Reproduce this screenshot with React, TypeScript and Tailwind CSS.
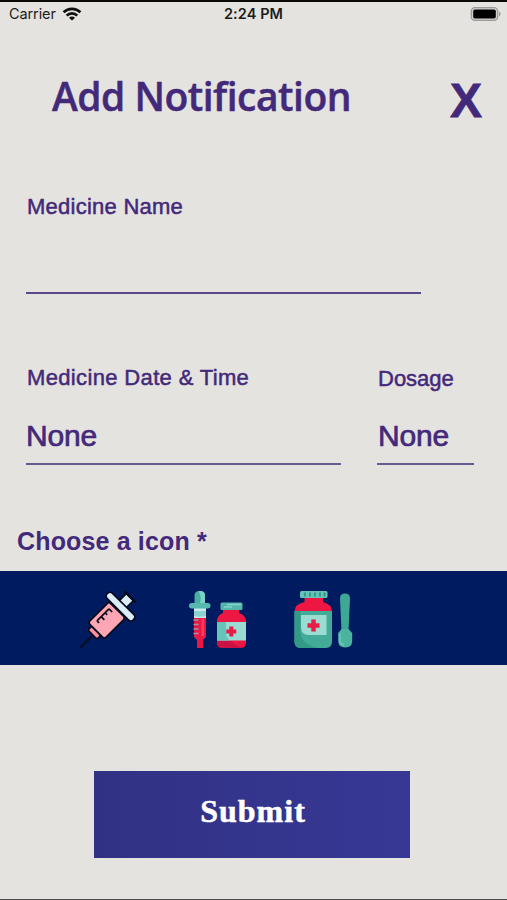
import React from 'react';

const Wifi = () => (
    <svg width="20" height="16" viewBox="0 0 20 16" fill="none" stroke="#111" strokeWidth="2.7">
        <path d="M1.6 6.3a12 12 0 0 1 16.8 0" />
        <path d="M4.7 9.6a7.6 7.6 0 0 1 10.6 0" />
        <path d="M10 14.6 7 11.8a4.4 4.4 0 0 1 6 0Z" fill="#111" stroke="none" />
    </svg>
);

const Battery = () => (
    <svg width="32" height="16" viewBox="0 0 32 16">
        <rect x="1.3" y="1.6" width="26.4" height="12.8" rx="3.6" fill="#d2d1cf" stroke="#9b9a98" strokeWidth="1.3" />
        <rect x="3.2" y="3.4" width="22.6" height="9.2" rx="1.8" fill="#000" />
        <path d="M29 5.6c2 .8 2 4 0 4.8Z" fill="#9b9a98" />
    </svg>
);

const StatusBar = () => (
    <div className="grid h-7 grid-cols-3 items-center border-t-2 border-[#0b0a09] pb-[3px] pl-[9px] pr-[5px] text-[#1c1c1c]">
        <div className="flex h-6 items-center gap-[6px]">
            <span className="font-['Inter',sans-serif] text-[14.5px] tracking-[-0.1px]">Carrier</span>
            <Wifi />
        </div>
        <span className="-ml-1 text-center font-['Inter',sans-serif] text-[14.5px] font-semibold tracking-[0.1px]">2:24 PM</span>
        <div className="flex justify-end">
            <Battery />
        </div>
    </div>
);

const Syringe = () => (
    <svg width="80" height="80" viewBox="0 0 80 80">
        <path d="M10.5 67.5 22 56" stroke="#050b1c" strokeWidth="2" />
        <g transform="translate(36.5 40.5) rotate(45)" stroke="#050b1c" strokeWidth="1.7" strokeLinejoin="round">
            <rect x="-6.5" y="14.5" width="13" height="5.5" rx="2" fill="#f7909f" />
            <rect x="-11.5" y="-15" width="23" height="29.5" rx="2.5" fill="#fea6b4" />
            <rect x="-5" y="-33" width="10" height="10" fill="#d9ecf8" />
            <path d="M-8-33.5H8" strokeWidth="2.2" />
            <rect x="-18.5" y="-23.5" width="37" height="7.5" rx="3.5" fill="#dcedfa" />
            <path d="M-6.5-10V7M-6.5-10h4.5M-6.5-4.5h3M-6.5 1h4.5M-6.5 7h3" fill="none" strokeWidth="1.7" />
        </g>
    </svg>
);

const DropperBottle = () => (
    <svg width="80" height="80" viewBox="0 0 80 80">
        {/* dropper */}
        <path d="M14.5 26V15.5q0-4.5 5.2-4.5t5.3 4.5V26Z" fill="#48aea2" />
        <path d="M18.5 11.2q6.5-.8 6.5 4.3V23h-5q2-6-1.5-11.8Z" fill="#79d3c6" />
        <path d="M14 27h12v29.5l-3 3V68h-6v-8.5l-3-3Z" fill="#c9e9ed" />
        <path d="M14 31h12v5q-6 1.5-12 0Z" fill="#89d4cc" />
        <path d="M14 38h12v18.5l-3 3V68h-6v-8.5l-3-3Z" fill="#ee1744" />
        <path d="M21.5 39H24v17h-2.5Z" fill="#ff3b60" />
        <path d="M13.5 40h5M13.5 44.5h5M13.5 49h5M13.5 53.5h5" stroke="#9c96a8" strokeWidth="1.5" />
        <rect x="9" y="23" width="21.5" height="5.5" rx="2.7" fill="#56b8ae" />
        {/* bottle */}
        <path d="M43 28.5h16V33q7 2 7 8.5v21q0 5.5-6 5.5H43q-6 0-6-5.5v-21q0-6.5 6-8.5Z" fill="#ee1744" />
        <path d="M37 42h29v18.5H37Z" fill="#9adbd2" />
        <path d="M37 42h9v11q0 5 4 7.5H37Z" fill="#65c5b8" />
        <path d="M37 61h14q4 5 13 6-2 1-5 1H43q-6 0-6-5.5Z" fill="#cc1244" />
        <rect x="40.5" y="22.5" width="22" height="7.5" rx="1.5" fill="#54b6aa" />
        <path d="M47 24.5h14M44 27h8" stroke="#83d4cb" strokeWidth="1.5" />
        <path d="M51.3 46.5v10M46.300 51.5h10" stroke="#e91c47" strokeWidth="4" />
    </svg>
);

const SyrupJar = () => (
    <svg width="80" height="80" viewBox="0 0 80 80">
        <path d="M19.500 17H38v5q9 2 9 10H9.500q0-8 10-10Z" fill="#ee1744" />
        <path d="M9.500 31H47v30.500q0 6.500-6 6.500H15.500q-6 0-6-6.500Z" fill="#42ac99" />
        <path d="M9.500 31h6v22q1 11 17 15h-17q-6 0-6-6.500Z" fill="#349987" />
        <rect x="15" y="11" width="27.500" height="7" rx="1.500" fill="#62c3b6" />
        <path d="M20 12.500v4M25 12.500v4M30 12.500v4M35 12.500v4M39.500 12.500v4" stroke="#2b897e" strokeWidth="1.500" />
        <path d="M16 35h25.500v20H24q-8 0-8-8Z" fill="#9adbd2" />
        <path d="M28.500 39.500v12M22.500 45.500h12" stroke="#e91c47" strokeWidth="4.500" />
        {/* spoon */}
        <path d="M55 18.500q0-5 5-5t5 5L63.500 51H56.500Z" fill="#3da896" />
        <path d="M56.500 49H63.500l3.700 4v8q0 6.500-7 6.500t-7-6.500v-8Z" fill="#4cb39e" />
        <path d="M55 54v7q0 3 4 4" fill="none" stroke="#72c9ba" strokeWidth="1.500" />
    </svg>
);

const App = () => {
    return (
        <div className="flex h-[900px] w-[507px] flex-col overflow-hidden border-b border-[#4c4b49] bg-[#e5e3df] font-['Liberation_Sans',Arial,sans-serif] text-[#43297a]">
            <StatusBar />

            <header className="mt-[42px] flex h-[60px] items-start justify-between pl-[52px] pr-[25px]">
                <h1 className="font-['Open_Sans',sans-serif] text-[39px] font-semibold leading-[52px] tracking-[-0.5px] whitespace-nowrap [-webkit-text-stroke:0.5px_#43297a]">Add Notification</h1>
                <button className="mt-[5px] text-[48px] font-bold leading-[52px] [-webkit-text-stroke:0.8px_#43297a]">X</button>
            </header>

            <label className="mt-[63px] flex h-[101px] w-[395px] ml-[26px] flex-col border-b-2 border-[#5b478a]">
                <span className="pl-px text-[22px] leading-7 tracking-[0.25px] [-webkit-text-stroke:0.5px_#43297a]">Medicine Name</span>
            </label>

            <div className="mt-[69px] flex h-[102px] gap-9 pl-[26px]">
                <div className="flex w-[315px] flex-col border-b-2 border-[#6b5994]">
                    <span className="pl-px text-[22px] leading-[30px] tracking-[0.35px] [-webkit-text-stroke:0.5px_#43297a]">Medicine Date &amp; Time</span>
                    <span className="mt-[25px] text-[30px] leading-9 tracking-[-0.2px] [-webkit-text-stroke:0.7px_#43297a]">None</span>
                </div>
                <div className="flex w-[97px] flex-col border-b-2 border-[#6b5994]">
                    <span className="mt-px pl-px text-[22px] leading-[30px] [-webkit-text-stroke:0.5px_#43297a]">Dosage</span>
                    <span className="mt-6 pl-px text-[30px] leading-9 tracking-[-0.2px] [-webkit-text-stroke:0.7px_#43297a]">None</span>
                </div>
            </div>

            <h2 className="mt-[60px] h-[46px] pl-[17px] text-[25px] font-bold leading-8 tracking-[0.15px]">Choose a icon *</h2>

            <div className="flex h-[94px] items-center bg-[#001b60] pl-[70px] pt-1">
                <Syringe />
                <div className="ml-[30px]"><DropperBottle /></div>
                <div className="ml-[25px]"><SyrupJar /></div>
            </div>

            <button className="ml-[94px] mt-[106px] h-[87px] w-[316px] bg-linear-to-r from-[#313184] to-[#373895] pb-[7px] pl-[2px] font-['Liberation_Serif',serif] text-[32px] font-bold tracking-[1px] text-white [-webkit-text-stroke:0.5px_#fff]">
                Submit
            </button>
        </div>
    );
};

export default App;
